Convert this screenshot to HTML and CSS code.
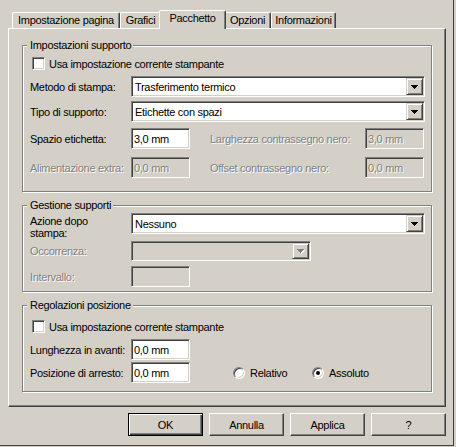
FILE: index.html
```html
<!DOCTYPE html>
<html lang="it">
<head>
<meta charset="utf-8">
<title>Pacchetto</title>
<link rel="stylesheet" href="styles.css">
</head>
<body>
<div class="dialog">
  <div class="tabs">
    <div class="tab w1">Impostazione pagina</div>
    <div class="tab w2">Grafici</div>
    <div class="tab w3 active">Pacchetto</div>
    <div class="tab w4">Opzioni</div>
    <div class="tab w5">Informazioni</div>
  </div>
  <div class="panel">
    <fieldset class="group g1">
      <legend>Impostazioni supporto</legend>
      <div class="cbrow m5"><span class="check"></span><span>Usa impostazione corrente stampante</span></div>
      <div class="row m6">
        <span class="lbl">Metodo di stampa:</span>
        <div class="combo"><span class="val">Trasferimento termico</span><span class="arrow"><svg width="7" height="4" viewBox="0 0 7 4"><path d="M0 0h7v1h-1v1h-1v1h-1v1h-1v-1h-1v-1h-1v-1h-1z" fill="#000"/></svg></span></div>
      </div>
      <div class="row m4">
        <span class="lbl">Tipo di supporto:</span>
        <div class="combo"><span class="val">Etichette con spazi</span><span class="arrow"><svg width="7" height="4" viewBox="0 0 7 4"><path d="M0 0h7v1h-1v1h-1v1h-1v1h-1v-1h-1v-1h-1v-1h-1z" fill="#000"/></svg></span></div>
      </div>
      <div class="row m6">
        <span class="lbl">Spazio etichetta:</span>
        <span class="edit">3,0 mm</span>
        <span class="lbl2 dis">Larghezza contrassegno nero:</span>
        <span class="edit off">3,0 mm</span>
      </div>
      <div class="row m8">
        <span class="lbl dis">Alimentazione extra:</span>
        <span class="edit off">0,0 mm</span>
        <span class="lbl2 dis">Offset contrassegno nero:</span>
        <span class="edit off">0,0 mm</span>
      </div>
    </fieldset>

    <fieldset class="group g2">
      <legend>Gestione supporti</legend>
      <div class="row m1">
        <span class="lbl two">Azione dopo<br>stampa:</span>
        <div class="combo"><span class="val">Nessuno</span><span class="arrow"><svg width="7" height="4" viewBox="0 0 7 4"><path d="M0 0h7v1h-1v1h-1v1h-1v1h-1v-1h-1v-1h-1v-1h-1z" fill="#000"/></svg></span></div>
      </div>
      <div class="row m7 h20">
        <span class="lbl dis">Occorrenza:</span>
        <div class="combo short off"><span class="val"></span><span class="arrow"><svg width="8" height="5" viewBox="0 0 8 5"><path d="M1 1h7v1h-1v1h-1v1h-1v1h-1v-1h-1v-1h-1v-1h-1z" fill="#fff"/><path d="M0 0h7v1h-1v1h-1v1h-1v1h-1v-1h-1v-1h-1v-1h-1z" fill="#808080"/></svg></span></div>
      </div>
      <div class="row m5">
        <span class="lbl dis">Intervallo:</span>
        <span class="edit off"></span>
      </div>
    </fieldset>

    <fieldset class="group g3">
      <legend>Regolazioni posizione</legend>
      <div class="cbrow m8"><span class="check"></span><span>Usa impostazione corrente stampante</span></div>
      <div class="row m6">
        <span class="lbl">Lunghezza in avanti:</span>
        <span class="edit">0,0 mm</span>
      </div>
      <div class="row m2">
        <span class="lbl">Posizione di arresto:</span>
        <span class="edit">0,0 mm</span>
        <div class="radios">
          <span class="ropt"><span class="radio"></span>Relativo</span>
          <span class="ropt"><span class="radio on"></span>Assoluto</span>
        </div>
      </div>
    </fieldset>
  </div>
  <div class="buttons">
    <span class="btn def">OK</span>
    <span class="btn">Annulla</span>
    <span class="btn">Applica</span>
    <span class="btn">?</span>
  </div>
</div>
</body>
</html>
```

FILE: styles.css
```css
* { box-sizing: border-box; }
html, body { margin: 0; padding: 0; }
body {
  background: #d4d0c8;
  font-family: "Liberation Sans", Arial, sans-serif;
  font-size: 11px;
  letter-spacing: -0.3px;
  color: #000;
  width: 456px;
  height: 447px;
  overflow: hidden;
}
.dialog {
  width: 454px;
  height: 446px;
  border-right: 1px solid #404040;
  border-bottom: 1px solid #404040;
  padding-top: 10px;
  display: flex;
  flex-direction: column;
}

/* tabs */
.tabs {
  display: flex;
  align-items: flex-end;
  height: 18px;
  margin-left: 12px;
}
.tab {
  height: 16px;
  border-top: 1px solid #fff;
  border-left: 1px solid #fff;
  border-right: 1px solid #404040;
  box-shadow: inset -1px 0 0 #808080;
  border-radius: 2px 2px 0 0;
  display: flex;
  align-items: center;
  justify-content: center;
  padding-bottom: 1px;
  white-space: nowrap;
  background: #d4d0c8;
}
.w1 { width: 108px; }
.w2 { width: 41px; }
.w3 { width: 63px; }
.w4 { width: 47px; }
.w5 { width: 65px; }
.tab.active {
  width: 67px;
  height: 19px;
  margin: 0 -2px -1px;
  position: relative;
  z-index: 1;
  padding-bottom: 4px;
}

/* panel */
.panel {
  margin-left: 8px;
  width: 438px;
  height: 379px;
  border: 1px solid;
  border-color: #fff #404040 #404040 #fff;
  box-shadow: inset -1px -1px 0 #808080;
  padding: 10px 13px 0 13px;
}

.group {
  margin: 0;
  padding: 0 6px 0 7px;
  border: 1px solid #808080;
  box-shadow: inset 1px 1px 0 #fff, 1px 1px 0 #fff;
  min-width: 0;
  width: 410px;
}
.group legend {
  padding: 0 2px 0 3px;
  margin-left: -3px;
  line-height: 13px;
  background: #d4d0c8;
}
.g1 { padding-bottom: 13px; }
.g2 { margin-top: 7px; padding-bottom: 4px; }
.g3 { margin-top: 7px; padding-bottom: 8px; }

.m1 { margin-top: 1px; }
.m2 { margin-top: 2px; }
.m4 { margin-top: 4px; }
.m5 { margin-top: 5px; }
.m6 { margin-top: 6px; }
.m7 { margin-top: 7px; }
.m8 { margin-top: 8px; }

.row {
  display: flex;
  align-items: center;
  height: 21px;
}
.row.h20 { height: 20px; }
.cbrow {
  display: flex;
  align-items: center;
  height: 13px;
  margin-left: 2px;
  gap: 4px;
}
.lbl {
  width: 101px;
  flex: none;
  white-space: nowrap;
}
.lbl.two {
  align-self: flex-start;
  line-height: 12px;
  padding-top: 2px;
  height: 21px;
  overflow: visible;
}
.lbl2 {
  width: 155px;
  margin-left: 20px;
  flex: none;
  white-space: nowrap;
}
.dis {
  color: #808080;
  text-shadow: 1px 1px 0 #fff;
}

.sunken {
  border: 1px solid;
}
.edit, .combo, .check, .radio {
  background: #fff;
  border: 1px solid;
  border-color: #808080 #fff #fff #808080;
  box-shadow: inset 1px 1px 0 #404040, inset -1px -1px 0 #d4d0c8;
}
.edit {
  width: 59px;
  height: 21px;
  flex: none;
  display: flex;
  align-items: center;
  padding-left: 2px;
  white-space: nowrap;
}
.edit.off {
  background: #d4d0c8;
  color: #808080;
  text-shadow: 1px 1px 0 #fff;
}
.combo {
  flex: 1;
  height: 21px;
  padding: 1px;
  display: flex;
  align-items: center;
}
.combo.short { flex: none; width: 180px; height: 20px; }
.combo.off { background: #d4d0c8; }
.combo .val {
  flex: 1;
  padding-left: 2px;
  white-space: nowrap;
}
.arrow {
  width: 17px;
  height: 17px;
  flex: none;
  border: 1px solid;
  border-color: #d4d0c8 #404040 #404040 #d4d0c8;
  box-shadow: inset 1px 1px 0 #fff, inset -1px -1px 0 #808080;
  background: #d4d0c8;
  display: flex;
  align-items: center;
  justify-content: center;
}
.combo.short .arrow { height: 16px; }
.arrow svg { display: block; }

.check {
  width: 13px;
  height: 13px;
  flex: none;
}

.radios {
  display: flex;
  margin-left: 43px;
}
.ropt {
  display: flex;
  align-items: center;
  gap: 5px;
  width: 79px;
}
.radio {
  width: 12px;
  height: 12px;
  border-radius: 50%;
  flex: none;
  display: flex;
  align-items: center;
  justify-content: center;
}
.radio.on::after {
  content: "";
  width: 4px;
  height: 4px;
  border-radius: 50%;
  background: #000;
}

/* buttons */
.buttons {
  display: flex;
  justify-content: flex-end;
  gap: 6px;
  margin: 6px 7px 0 0;
}
.btn {
  width: 75px;
  height: 23px;
  border: 1px solid;
  border-color: #fff #404040 #404040 #fff;
  box-shadow: inset -1px -1px 0 #808080;
  background: #d4d0c8;
  display: flex;
  align-items: center;
  justify-content: center;
}
.btn.def {
  border: 1px solid #000;
  box-shadow: inset 1px 1px 0 #fff, inset -1px -1px 0 #404040, inset -2px -2px 0 #808080;
}
```
